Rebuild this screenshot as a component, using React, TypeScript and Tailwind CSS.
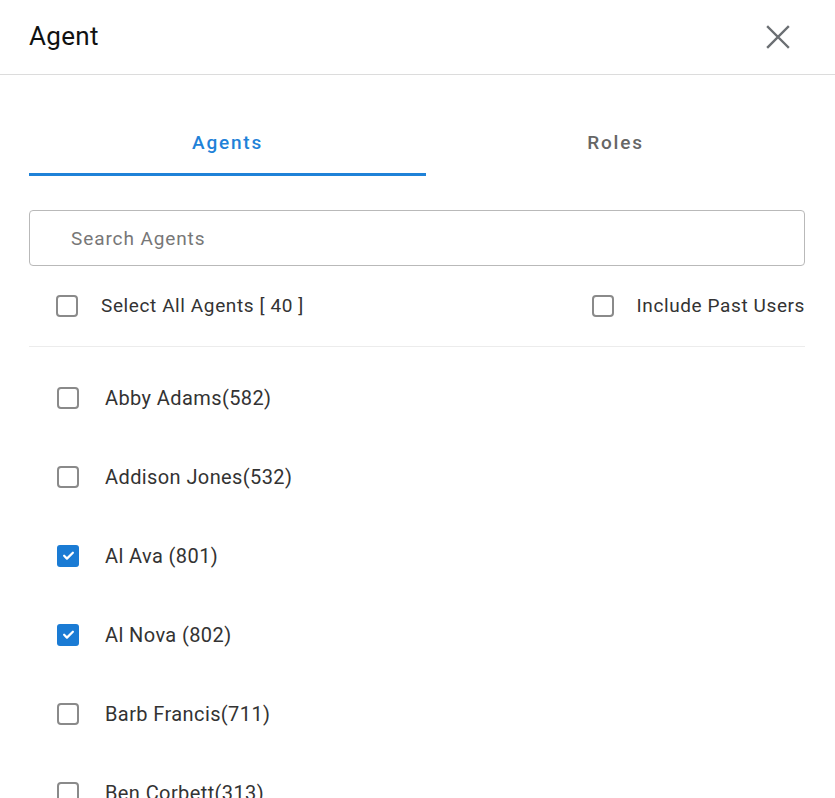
import { useState } from "react";

const agents = [
    { name: "Abby Adams(582)", checked: false },
    { name: "Addison Jones(532)", checked: false },
    { name: "Al Ava (801)", checked: true },
    { name: "Al Nova (802)", checked: true },
    { name: "Barb Francis(711)", checked: false },
    { name: "Ben Corbett(313)", checked: false },
];

function Box({ checked }: { checked: boolean }) {
    if (checked) {
        return (
            <span className="w-[22px] h-[22px] rounded-[3px] bg-[#1a7bd4] flex items-center justify-center shrink-0">
                <svg width="15" height="15" viewBox="0 0 24 24" fill="none">
                    <path d="M5 12.5l4.5 4.5L19 7.5" stroke="white" strokeWidth={3.6} strokeLinecap="round" strokeLinejoin="round" />
                </svg>
            </span>
        );
    }
    return <span className="w-[22px] h-[22px] rounded-[4px] border-2 border-[#8a8a8a] shrink-0" />;
}

export default function App() {
    const [tab, setTab] = useState("agents");
    const [list, setList] = useState(agents);

    return (
        <div className="w-[835px] h-[798px] overflow-hidden bg-white font-['Roboto',sans-serif] text-[#222]">
            <div className="h-[75px] flex items-center justify-between pl-[29px] pr-[45px] border-b border-[#dcdcdc]">
                <h1 className="text-[26px] tracking-[0.3px] text-[#111] leading-none -mt-[2px]">Agent</h1>
                <svg width="24" height="24" viewBox="0 0 24 24" fill="none">
                    <path d="M2 2L22 22M22 2L2 22" stroke="#6b6f73" strokeWidth={2.4} strokeLinecap="square" />
                </svg>
            </div>

            <div className="pl-[29px] pr-[30px]">
                <div className="flex mt-[34px]">
                    <button
                        onClick={() => setTab("agents")}
                        className={`w-[397px] h-[67px] pt-[4px] text-[19px] font-medium tracking-[1.8px] border-b-[3px] ${tab === "agents" ? "text-[#1f82d8] border-[#1f82d8]" : "text-[#666] border-transparent"}`}
                    >
                        Agents
                    </button>
                    <button
                        onClick={() => setTab("roles")}
                        className={`flex-1 h-[67px] pt-[4px] text-[19px] font-medium tracking-[1.8px] border-b-[3px] ${tab === "roles" ? "text-[#1f82d8] border-[#1f82d8]" : "text-[#666] border-transparent"}`}
                    >
                        Roles
                    </button>
                </div>

                <input
                    placeholder="Search Agents"
                    className="mt-[34px] w-full h-[56px] border border-[#b9b9b9] rounded-[4px] pl-[41px] text-[19px] tracking-[0.9px] placeholder:text-[#777] outline-none"
                />

                <div className="flex items-center justify-between h-[81px] border-b border-[#ececec]">
                    <label className="flex items-center pl-[27px] gap-[23px] text-[19px] tracking-[0.6px] text-[#333]">
                        <Box checked={false} />
                        Select All Agents [ 40 ]
                    </label>
                    <label className="flex items-center gap-[23px] text-[19px] tracking-[0.6px] text-[#333]">
                        <Box checked={false} />
                        Include Past Users
                    </label>
                </div>

                <div className="pt-[11px]">
                    {list.map((a, i) => (
                        <div
                            key={a.name}
                            onClick={() => setList(list.map((x, j) => (j === i ? { ...x, checked: !x.checked } : x)))}
                            className="flex items-center h-[79px] pl-[28px] gap-[26px] text-[20px] tracking-[0.4px] text-[#333] cursor-pointer"
                        >
                            <Box checked={a.checked} />
                            {a.name}
                        </div>
                    ))}
                </div>
            </div>
        </div>
    );
}
